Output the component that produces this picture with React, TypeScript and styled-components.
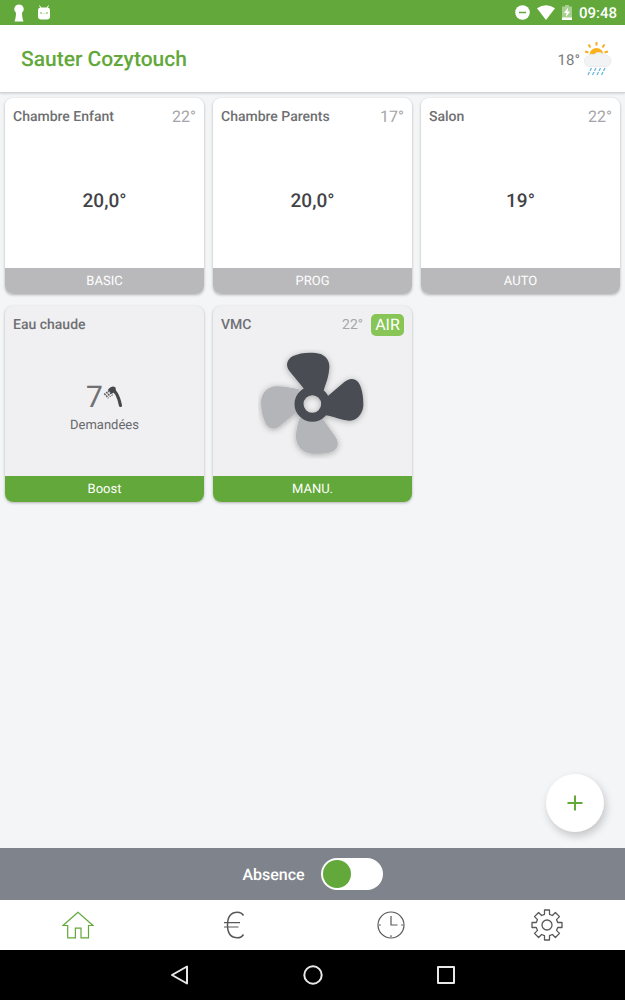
import React, { useState } from "react";
import styled, { createGlobalStyle } from "styled-components";

const green = "#62a83a";

const GlobalStyle = createGlobalStyle`
  *, *::before, *::after { box-sizing: border-box; }
  body {
    margin: 0;
    font-family: Roboto, "Liberation Sans", sans-serif;
    text-rendering: geometricPrecision;
  }
  button { font: inherit; border: 0; padding: 0; background: none; cursor: pointer; }
  h1, h2, p { margin: 0; }
  svg { display: block; }
`;

const Page = styled.div`
  min-height: 100vh;
  display: flex;
  flex-direction: column;
  background: #f4f5f7;
`;

const StatusBar = styled.div`
  height: 25px;
  padding: 0 8px 0 11px;
  display: flex;
  align-items: center;
  justify-content: space-between;
  background: ${green};
  color: #fff;
`;

const StatusGroup = styled.div<{ $gap: number }>`
  display: flex;
  align-items: center;
  gap: ${(p) => p.$gap}px;
`;

const Clock = styled.span`
  padding-top: 1px;
  font-size: 15px;
  line-height: 24px;
  font-weight: 500;
`;

const Header = styled.header`
  height: 68px;
  padding: 2px 12px 0 21px;
  display: flex;
  align-items: center;
  justify-content: space-between;
  background: #fff;
  border-bottom: 1px solid #d2d3d5;
  box-shadow: 0 1px 2px rgba(0, 0, 0, 0.12);
`;

const Title = styled.h1`
  color: ${green};
  font-size: 21px;
  line-height: 28px;
  font-weight: 500;
`;

const Weather = styled.div`
  display: flex;
  align-items: center;
  gap: 3px;
  color: #7b7b7d;
  font-size: 15px;
`;

const Main = styled.main`
  position: relative;
  flex: 1;
  padding: 5px 5px 100px;
`;

const Grid = styled.div`
  display: grid;
  grid-template-columns: repeat(3, 1fr);
  gap: 12px 9px;
`;

const Card = styled.article<{ $muted?: boolean }>`
  display: flex;
  flex-direction: column;
  height: 196px;
  overflow: hidden;
  border-radius: 8px;
  background: ${(p) => (p.$muted ? "#f0f0f2" : "#fff")};
  box-shadow: 0 1px 3px rgba(0, 0, 0, 0.28);
`;

const CardHead = styled.div`
  display: flex;
  align-items: center;
  height: 36px;
  padding: 2px 8px 0;
`;

const CardTitle = styled.h2`
  flex: 1;
  color: #6f6f72;
  font-size: 14px;
  line-height: 20px;
  font-weight: 500;
`;

const Ambient = styled.span<{ $small?: boolean }>`
  color: #a6a6a9;
  font-size: ${(p) => (p.$small ? 14 : 16)}px;
  line-height: 20px;
`;

const AirBadge = styled.span`
  margin-left: 8px;
  width: 33px;
  border-radius: 5px;
  background: #86c556;
  color: #fff;
  font-size: 16px;
  line-height: 22px;
  text-align: center;
`;

const CardBody = styled.div`
  flex: 1;
  min-height: 0;
  display: flex;
  flex-direction: column;
  align-items: center;
  justify-content: center;
`;

const Target = styled.p`
  color: #434346;
  font-size: 19px;
  line-height: 24px;
  font-weight: 500;
`;

const WaterStatus = styled.div`
  display: flex;
  flex-direction: column;
  align-items: center;
  padding-bottom: 2px;
`;

const Showers = styled.div`
  display: flex;
  align-items: center;
  color: #707073;
  font-size: 30px;
  line-height: 36px;
`;

const Caption = styled.p`
  color: #69696c;
  font-size: 13px;
  line-height: 20px;
`;

const FanWrap = styled.div`
  padding-bottom: 10px;
`;

const Mode = styled.div<{ $active?: boolean }>`
  padding-top: 3px;
  padding-bottom: 1px;
  background: ${(p) => (p.$active ? green : "#b9b9bb")};
  color: #fff;
  font-size: 13px;
  line-height: 22px;
  text-align: center;
`;

const AddButton = styled.button`
  position: absolute;
  right: 21px;
  bottom: 16px;
  width: 58px;
  height: 58px;
  display: grid;
  place-items: center;
  border-radius: 50%;
  background: #fff;
  box-shadow: 2px 4px 8px rgba(0, 0, 0, 0.2);
`;

const AbsenceBar = styled.label`
  height: 52px;
  display: flex;
  align-items: center;
  justify-content: center;
  gap: 16px;
  background: #7f838b;
  color: #fff;
  font-size: 16px;
  font-weight: 500;
`;

const Toggle = styled.input`
  appearance: none;
  margin: 0;
  width: 62px;
  height: 32px;
  padding: 2px;
  display: flex;
  border-radius: 16px;
  background: #fff;
  cursor: pointer;

  &::before {
    content: "";
    width: 28px;
    height: 28px;
    border-radius: 50%;
    background: ${green};
  }

  &:checked {
    justify-content: flex-end;
  }
`;

const Tabs = styled.nav`
  height: 50px;
  display: grid;
  grid-template-columns: repeat(4, 1fr);
  background: #fff;
`;

const Tab = styled.button<{ $active?: boolean }>`
  display: grid;
  place-items: center;
  color: ${(p) => (p.$active ? green : "#58585a")};
`;

const SystemNav = styled.nav`
  height: 50px;
  display: flex;
  justify-content: center;
  background: #000;
`;

const SystemButton = styled.button`
  flex: 0 1 133px;
  display: grid;
  place-items: center;
  color: #e8e8e8;
`;

const KeyholeIcon = () => (
  <svg width="16" height="18" viewBox="0 0 16 18" fill="#fff" aria-hidden="true">
    <path d="M8 .5a4.700 4.700 0 0 0-3 8.300C5 12 4.500 15 3.500 17.500h9C11.500 15 11 12 11 8.800A4.700 4.700 0 0 0 8 .5Z" />
  </svg>
);

const AndroidIcon = () => (
  <svg width="14" height="16" viewBox="0 0 14 16" aria-hidden="true">
    <path d="M2.500.5 4 3M11.500.5 10 3" stroke="#fff" strokeWidth="1" />
    <rect x="1" y="2.500" width="12" height="12" rx="3" fill="#fff" />
    <circle cx="4" cy="8" r=".8" fill={green} />
    <circle cx="10" cy="8" r=".8" fill={green} />
    <path d="M5.500 8.500h3" stroke="#cfe3c2" strokeWidth=".8" />
  </svg>
);

const DoNotDisturbIcon = () => (
  <svg width="15" height="15" viewBox="0 0 15 15" aria-hidden="true">
    <circle cx="7.500" cy="7.500" r="7.300" fill="#fff" />
    <path d="M4 7.500h7" stroke={green} strokeWidth="1.500" />
  </svg>
);

const WifiIcon = () => (
  <svg width="18" height="15" viewBox="0 0 18 15" fill="#fff" aria-hidden="true">
    <path d="M0 3.200Q9-2.800 18 3.200L9 15Z" />
  </svg>
);

const BatteryIcon = () => (
  <svg width="10" height="15" viewBox="0 0 10 15" aria-hidden="true">
    <path d="M3 0h4v1.500h3V15H0V1.500h3Z" fill="#fff" opacity=".45" />
    <path d="M0 12.500h10V15H0Z" fill="#fff" />
    <path d="M6 2.500 2 8h2.500L4 12l4-5.500H5.500Z" fill="#fff" />
  </svg>
);

const WeatherIcon = () => (
  <svg width="30" height="36" viewBox="0 1 30 36" aria-hidden="true">
    <path
      d="M13.500 1v3.500M5.500 3.500 7.500 6.500M21.500 3.500l-2 3M2 10.500l3.500 1M25 10.500l-3.500 1"
      stroke="#f5ae24"
      strokeWidth="2"
    />
    <path d="M6.500 14a7 7 0 0 1 14 0Z" fill="#fbb11c" />
    <path
      d="M7 25.500a5.500 5.500 0 0 1-1.500-10.800A5 5 0 0 1 11 13.500a7 7 0 0 1 10.500.5 5.800 5.800 0 0 1 1.500 11.500Z"
      fill="#f2f3f5"
      stroke="#e3e5e8"
      strokeWidth=".7"
    />
    <path
      d="m8.500 27-1.500 3M13 27l-1.500 3M17.500 27 16 30M22 27l-1.500 3M6.500 31 5 34M11 31l-1.500 3M15.500 31 14 34M20 31l-1.500 3"
      stroke="#69b7dc"
      strokeWidth="1.300"
    />
  </svg>
);

const ShowerIcon = () => (
  <svg width="20" height="24" viewBox="0 2 20 24" fill="none" aria-hidden="true">
    <path d="M8 5.500C12 6 15.500 12 17.500 21.500" stroke="#48484c" strokeWidth="3.200" strokeLinecap="round" />
    <path d="M5 5.500Q9 1 12.500 3.500L13 7 8.500 10Z" fill="#48484c" />
    <path d="m5 6.500 4.500 5M3.200 8l4.300 4.700M1.200 9.500l4.300 4.700" stroke="#5b5b5f" strokeWidth="1.500" strokeDasharray="2 .8" />
  </svg>
);

const FanIcon = () => (
  <svg width="110" height="110" viewBox="157 147 330 330" role="img" aria-label="Ventilation">
    <defs>
      <filter id="fan-shadow" x="-15%" y="-15%" width="130%" height="130%">
        <feDropShadow dx="0" dy="3" stdDeviation="9" floodColor="#000" floodOpacity=".3" />
      </filter>
    </defs>
    <g filter="url(#fan-shadow)">
      <g fill="#b3b5b8">
        <path d="M283 352C275 375 270 395 271 415 274 440 290 458 318 461 340 463 370 460 385 452 398 443 400 428 390 412L350 355Z" />
        <path d="M280 268C255 262 225 257 207 259 180 262 167 285 166 305 166 330 172 360 185 377 195 388 208 388 220 380L275 335Z" />
      </g>
      <g fill="#484d53">
        <path d="M298 270 253 215C240 200 240 180 262 168 285 157 320 155 345 162 370 172 374 195 370 212 368 235 360 250 354 272Z" />
        <path d="M364 290 415 247C428 236 445 232 458 247 468 260 474 290 473 318 470 345 452 362 430 362 405 360 385 350 360 346Z" />
      </g>
      <circle cx="320" cy="312" r="40" fill="none" stroke="#484d53" strokeWidth="27" />
    </g>
  </svg>
);

const PlusIcon = () => (
  <svg width="16" height="16" viewBox="0 0 16 16" aria-hidden="true">
    <path d="M8 .5v15M.5 8h15" stroke={green} strokeWidth="2" />
  </svg>
);

const HomeIcon = () => (
  <svg width="32" height="28" viewBox="0 0 32 28" fill="none" stroke="currentColor" strokeWidth="1.200" aria-hidden="true">
    <path d="M16 1.200 1 14.500h4.700v12.300h7.700V17.200h5.600v9.600h7.500V14.500H31Z" />
  </svg>
);

const EuroIcon = () => (
  <svg width="22" height="28" viewBox="0 0 22 28" fill="none" stroke="currentColor" aria-hidden="true">
    <path d="M20.500 4.500C19 2 17 1.200 14.500 1.200 8 1.200 4.500 6 4.500 14s3.500 12.800 10 12.800c2.500 0 4.500-.8 6-3.300" strokeWidth="1.500" />
    <path d="M1 11.700h16M1 16h14.500" strokeWidth="1.200" />
  </svg>
);

const ClockIcon = () => (
  <svg width="28" height="28" viewBox="0 0 28 28" fill="none" stroke="currentColor" strokeWidth="1.200" aria-hidden="true">
    <circle cx="14" cy="14" r="13" />
    <path d="M14 5v9h6.500M2 14h1.800M24.200 14H26M14 24.200V26" />
  </svg>
);

const GearIcon = () => (
  <svg width="32" height="32" viewBox="0 0 32 32" fill="none" stroke="currentColor" strokeWidth="1.300" strokeLinejoin="round" aria-hidden="true">
    <circle cx="16" cy="16" r="5" />
    <path d="M13.500 1h5v4.300l2.900 1.200 3-3 4.100 4.100-3 3 1.200 2.900H31v5h-4.300l-1.200 2.900 3 3-4.100 4.100-3-3-2.900 1.200V31h-5v-4.300l-2.900-1.200-3 3-4.100-4.100 3-3-1.200-2.900H1v-5h4.300l1.200-2.900-3-3 4.100-4.100 3 3 2.900-1.200Z" />
  </svg>
);

const BackIcon = () => (
  <svg width="20" height="20" viewBox="0 0 20 20" fill="none" stroke="currentColor" strokeWidth="2" strokeLinejoin="round" aria-hidden="true">
    <path d="M17 1.500v17L2 10Z" />
  </svg>
);

const CircleIcon = () => (
  <svg width="20" height="20" viewBox="0 0 20 20" fill="none" stroke="currentColor" strokeWidth="2" aria-hidden="true">
    <circle cx="10" cy="10" r="8.700" />
  </svg>
);

const SquareIcon = () => (
  <svg width="18" height="18" viewBox="0 0 18 18" fill="none" stroke="currentColor" strokeWidth="2" strokeLinejoin="round" aria-hidden="true">
    <rect x="1" y="1" width="16" height="16" />
  </svg>
);

const rooms = [
  { name: "Chambre Enfant", ambient: "22°", target: "20,0°", mode: "BASIC" },
  { name: "Chambre Parents", ambient: "17°", target: "20,0°", mode: "PROG" },
  { name: "Salon", ambient: "22°", target: "19°", mode: "AUTO" },
];

const tabs = [
  { label: "Accueil", Icon: HomeIcon },
  { label: "Consommation", Icon: EuroIcon },
  { label: "Programmation", Icon: ClockIcon },
  { label: "Réglages", Icon: GearIcon },
];

export default function App() {
  const [away, setAway] = useState(false);
  const [tab, setTab] = useState(0);

  return (
    <Page>
      <GlobalStyle />
      <StatusBar>
        <StatusGroup $gap={10}>
          <KeyholeIcon />
          <AndroidIcon />
        </StatusGroup>
        <StatusGroup $gap={7}>
          <DoNotDisturbIcon />
          <WifiIcon />
          <BatteryIcon />
          <Clock>09:48</Clock>
        </StatusGroup>
      </StatusBar>

      <Header>
        <Title>Sauter Cozytouch</Title>
        <Weather>
          <span>18°</span>
          <WeatherIcon />
        </Weather>
      </Header>

      <Main>
        <Grid>
          {rooms.map((room) => (
            <Card key={room.name}>
              <CardHead>
                <CardTitle>{room.name}</CardTitle>
                <Ambient>{room.ambient}</Ambient>
              </CardHead>
              <CardBody>
                <Target>{room.target}</Target>
              </CardBody>
              <Mode>{room.mode}</Mode>
            </Card>
          ))}
          <Card $muted>
            <CardHead>
              <CardTitle>Eau chaude</CardTitle>
            </CardHead>
            <CardBody>
              <WaterStatus>
                <Showers>
                  <span>7</span>
                  <ShowerIcon />
                </Showers>
                <Caption>Demandées</Caption>
              </WaterStatus>
            </CardBody>
            <Mode $active>Boost</Mode>
          </Card>
          <Card $muted>
            <CardHead>
              <CardTitle>VMC</CardTitle>
              <Ambient $small>22°</Ambient>
              <AirBadge>AIR</AirBadge>
            </CardHead>
            <CardBody>
              <FanWrap>
                <FanIcon />
              </FanWrap>
            </CardBody>
            <Mode $active>MANU.</Mode>
          </Card>
        </Grid>
        <AddButton aria-label="Ajouter">
          <PlusIcon />
        </AddButton>
      </Main>

      <AbsenceBar>
        <span>Absence</span>
        <Toggle type="checkbox" role="switch" checked={away} onChange={(e) => setAway(e.target.checked)} />
      </AbsenceBar>

      <Tabs>
        {tabs.map(({ label, Icon }, i) => (
          <Tab key={label} $active={i === tab} aria-label={label} onClick={() => setTab(i)}>
            <Icon />
          </Tab>
        ))}
      </Tabs>

      <SystemNav>
        <SystemButton aria-label="Retour">
          <BackIcon />
        </SystemButton>
        <SystemButton aria-label="Écran d'accueil">
          <CircleIcon />
        </SystemButton>
        <SystemButton aria-label="Applications récentes">
          <SquareIcon />
        </SystemButton>
      </SystemNav>
    </Page>
  );
}
